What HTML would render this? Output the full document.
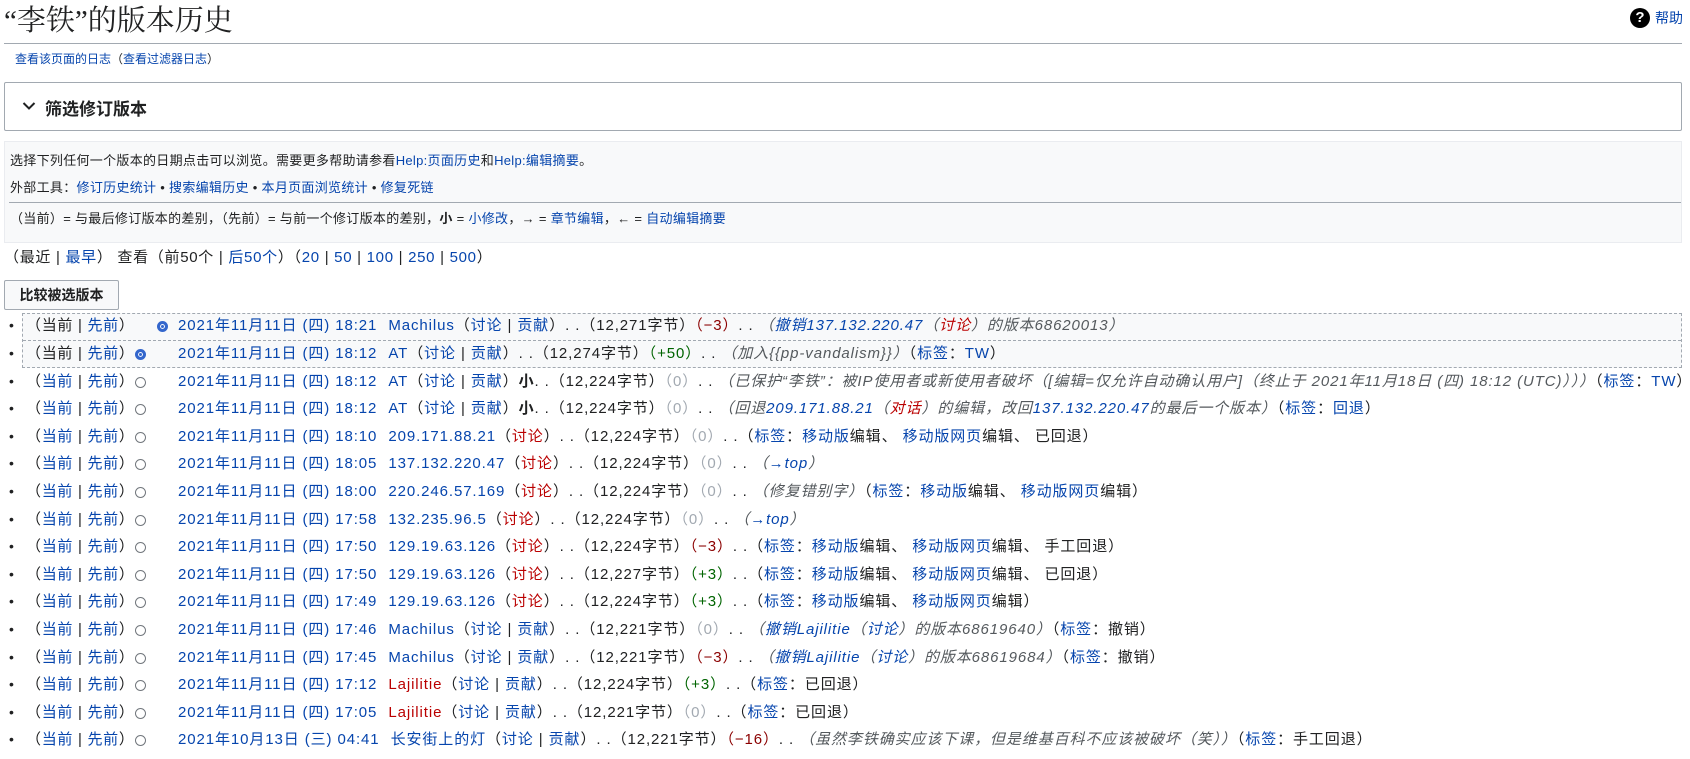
<!DOCTYPE html>
<html><head><meta charset="utf-8">
<style>
*{margin:0;padding:0;box-sizing:border-box}
body{width:1690px;height:759px;overflow:hidden;background:#fff;color:#202122;font-family:"Liberation Sans","Noto Sans CJK SC",sans-serif;font-size:14px;position:relative}
a{color:#0645ad;text-decoration:none}
a.new{color:#ba0000}
.abs{position:absolute;white-space:nowrap}
h1{position:absolute;left:4px;top:2px;font-family:"Liberation Serif","Noto Serif CJK SC",serif;font-weight:normal;font-size:29px;line-height:38px;white-space:nowrap}
.hr{position:absolute;left:4px;width:1678px;top:43px;height:1px;background:#a2a9b1}
.filter{position:absolute;left:4px;top:82px;width:1678px;height:49px;border:1px solid #a2a9b1;border-radius:2px}
.filter span{position:absolute;left:40px;top:12px;font-weight:bold;font-size:17px}
.info{position:absolute;left:4px;top:141px;width:1678px;height:102px;background:#f8f9fa;border:1px solid #eaecf0;font-size:13px;letter-spacing:.3px}
.info div{position:absolute;left:5px;white-space:nowrap}
.btn{position:absolute;left:4px;top:280px;width:115px;height:30px;border:1px solid #a2a9b1;border-radius:2px;background:#f8f9fa;font-weight:bold;font-size:14px;text-align:center;line-height:28px}
.sel{position:absolute;left:22px;top:313px;width:1660px;height:55px;border:1px dashed #a2a9b1;background:#f8f9fa}
.sel div{position:absolute;left:0;right:0;top:26px;border-top:1px dashed #a2a9b1}
.row{position:absolute;left:0;height:27.6px;line-height:27.6px;white-space:nowrap;font-size:15px;letter-spacing:.7px}
.row .b{position:absolute;left:9px;top:0;font-size:14px}
.row .c{position:absolute;left:26px}
.row .r{position:absolute;top:9px;width:11px;height:11px;border-radius:50%;border:1px solid #72777d;background:#fff}
.row .r.on{border:3px solid #36c;box-shadow:inset 0 0 0 1px #fff;background:#36c}
.row .m{position:absolute;left:178px;letter-spacing:.9px}
.row .u{margin-left:6px}
.g{color:#a2a9b1}.neg{color:#8b0000}.pos{color:#006400}
i{font-style:italic;color:#54595d}
</style></head><body>
<h1>“李铁”的版本历史</h1>
<div class="abs" style="left:1630px;top:8px;width:20px;height:20px;border-radius:50%;background:#000;color:#fff;font-weight:bold;font-size:15px;text-align:center;line-height:20px">?</div>
<a class="abs" style="left:1655px;top:8px;font-size:14px;line-height:20px" href="#">帮助</a>
<div class="hr"></div>
<div class="abs" style="left:15px;top:50px;font-size:12px"><a href="#">查看该页面的日志</a>（<a href="#">查看过滤器日志</a>）</div>
<div class="filter"><svg style="position:absolute;left:17px;top:18px" width="14" height="10" viewBox="0 0 14 10"><path d="M1.5 2 L7 7.5 L12.5 2" fill="none" stroke="#202122" stroke-width="2"/></svg><span>筛选修订版本</span></div>
<div class="info">
<div style="top:8px">选择下列任何一个版本的日期点击可以浏览。需要更多帮助请参看<a href="#">Help:页面历史</a>和<a href="#">Help:编辑摘要</a>。</div>
<div style="top:35px">外部工具：<a href="#">修订历史统计</a> • <a href="#">搜索编辑历史</a> • <a href="#">本月页面浏览统计</a> • <a href="#">修复死链</a></div>
<div style="top:60px;left:4px;right:0;height:1px;background:#a2a9b1"></div>
<div style="top:66px">（当前）= 与最后修订版本的差别，（先前）= 与前一个修订版本的差别，<b>小</b> = <a href="#">小修改</a>，→ = <a href="#">章节编辑</a>，← = <a href="#">自动编辑摘要</a></div>
</div>
<div class="abs" style="left:4px;top:248px;line-height:20px;font-size:15px;letter-spacing:.7px">（最近 | <a href="#">最早</a>） 查看（前50个 | <a href="#">后50个</a>）（<a href="#">20</a> | <a href="#">50</a> | <a href="#">100</a> | <a href="#">250</a> | <a href="#">500</a>）</div>
<div class="btn">比较被选版本</div>
<div class="sel"><div></div></div>

<div class="row" style="top:312px"><span class="b">•</span><span class="c">（当前 | <a href="#">先前</a>）</span><span class="r on" style="left:157px"></span><span class="m"><a href="#">2021年11月11日 (四) 18:21</a> <a class="u" href="#">Machilus</a>（<a href="#">讨论</a> | <a href="#">贡献</a>）. .（12,271字节）<span class="neg">（−3）</span>. . <i>（<a href="#">撤销137.132.220.47</a>（<a class="new" href="#">讨论</a>）的版本68620013）</i></span></div>
<div class="row" style="top:340px"><span class="b">•</span><span class="c">（当前 | <a href="#">先前</a>）</span><span class="r on" style="left:135px"></span><span class="m"><a href="#">2021年11月11日 (四) 18:12</a> <a class="u" href="#">AT</a>（<a href="#">讨论</a> | <a href="#">贡献</a>）. .（12,274字节）<span class="pos">（+50）</span>. . <i>（加入{{pp-vandalism}}）</i>（<a href="#">标签</a>：<a href="#">TW</a>）</span></div>
<div class="row" style="top:368px"><span class="b">•</span><span class="c">（<a href="#">当前</a> | <a href="#">先前</a>）</span><span class="r" style="left:135px"></span><span class="m"><a href="#">2021年11月11日 (四) 18:12</a> <a class="u" href="#">AT</a>（<a href="#">讨论</a> | <a href="#">贡献</a>）<b>小</b>. .（12,224字节）<span class="g">（0）</span>. . <i>（已保护“李铁”：被IP使用者或新使用者破坏（[编辑=仅允许自动确认用户]（终止于 2021年11月18日 (四) 18:12 (UTC)）））</i>（<a href="#">标签</a>：<a href="#">TW</a>）</span></div>
<div class="row" style="top:395px"><span class="b">•</span><span class="c">（<a href="#">当前</a> | <a href="#">先前</a>）</span><span class="r" style="left:135px"></span><span class="m"><a href="#">2021年11月11日 (四) 18:12</a> <a class="u" href="#">AT</a>（<a href="#">讨论</a> | <a href="#">贡献</a>）<b>小</b>. .（12,224字节）<span class="g">（0）</span>. . <i>（回退<a href="#">209.171.88.21</a>（<a class="new" href="#">对话</a>）的编辑，改回<a href="#">137.132.220.47</a>的最后一个版本）</i>（<a href="#">标签</a>：<a href="#">回退</a>）</span></div>
<div class="row" style="top:423px"><span class="b">•</span><span class="c">（<a href="#">当前</a> | <a href="#">先前</a>）</span><span class="r" style="left:135px"></span><span class="m"><a href="#">2021年11月11日 (四) 18:10</a> <a class="u" href="#">209.171.88.21</a>（<a class="new" href="#">讨论</a>）. .（12,224字节）<span class="g">（0）</span>. .（<a href="#">标签</a>：<a href="#">移动版</a>编辑、 <a href="#">移动版网页</a>编辑、 已回退）</span></div>
<div class="row" style="top:450px"><span class="b">•</span><span class="c">（<a href="#">当前</a> | <a href="#">先前</a>）</span><span class="r" style="left:135px"></span><span class="m"><a href="#">2021年11月11日 (四) 18:05</a> <a class="u" href="#">137.132.220.47</a>（<a class="new" href="#">讨论</a>）. .（12,224字节）<span class="g">（0）</span>. . <i>（<a href="#">→top</a>）</i></span></div>
<div class="row" style="top:478px"><span class="b">•</span><span class="c">（<a href="#">当前</a> | <a href="#">先前</a>）</span><span class="r" style="left:135px"></span><span class="m"><a href="#">2021年11月11日 (四) 18:00</a> <a class="u" href="#">220.246.57.169</a>（<a class="new" href="#">讨论</a>）. .（12,224字节）<span class="g">（0）</span>. . <i>（修复错别字）</i>（<a href="#">标签</a>：<a href="#">移动版</a>编辑、 <a href="#">移动版网页</a>编辑）</span></div>
<div class="row" style="top:506px"><span class="b">•</span><span class="c">（<a href="#">当前</a> | <a href="#">先前</a>）</span><span class="r" style="left:135px"></span><span class="m"><a href="#">2021年11月11日 (四) 17:58</a> <a class="u" href="#">132.235.96.5</a>（<a class="new" href="#">讨论</a>）. .（12,224字节）<span class="g">（0）</span>. . <i>（<a href="#">→top</a>）</i></span></div>
<div class="row" style="top:533px"><span class="b">•</span><span class="c">（<a href="#">当前</a> | <a href="#">先前</a>）</span><span class="r" style="left:135px"></span><span class="m"><a href="#">2021年11月11日 (四) 17:50</a> <a class="u" href="#">129.19.63.126</a>（<a class="new" href="#">讨论</a>）. .（12,224字节）<span class="neg">（−3）</span>. .（<a href="#">标签</a>：<a href="#">移动版</a>编辑、 <a href="#">移动版网页</a>编辑、 手工回退）</span></div>
<div class="row" style="top:561px"><span class="b">•</span><span class="c">（<a href="#">当前</a> | <a href="#">先前</a>）</span><span class="r" style="left:135px"></span><span class="m"><a href="#">2021年11月11日 (四) 17:50</a> <a class="u" href="#">129.19.63.126</a>（<a class="new" href="#">讨论</a>）. .（12,227字节）<span class="pos">（+3）</span>. .（<a href="#">标签</a>：<a href="#">移动版</a>编辑、 <a href="#">移动版网页</a>编辑、 已回退）</span></div>
<div class="row" style="top:588px"><span class="b">•</span><span class="c">（<a href="#">当前</a> | <a href="#">先前</a>）</span><span class="r" style="left:135px"></span><span class="m"><a href="#">2021年11月11日 (四) 17:49</a> <a class="u" href="#">129.19.63.126</a>（<a class="new" href="#">讨论</a>）. .（12,224字节）<span class="pos">（+3）</span>. .（<a href="#">标签</a>：<a href="#">移动版</a>编辑、 <a href="#">移动版网页</a>编辑）</span></div>
<div class="row" style="top:616px"><span class="b">•</span><span class="c">（<a href="#">当前</a> | <a href="#">先前</a>）</span><span class="r" style="left:135px"></span><span class="m"><a href="#">2021年11月11日 (四) 17:46</a> <a class="u" href="#">Machilus</a>（<a href="#">讨论</a> | <a href="#">贡献</a>）. .（12,221字节）<span class="g">（0）</span>. . <i>（<a href="#">撤销Lajilitie</a>（<a href="#">讨论</a>）的版本68619640）</i>（<a href="#">标签</a>：撤销）</span></div>
<div class="row" style="top:644px"><span class="b">•</span><span class="c">（<a href="#">当前</a> | <a href="#">先前</a>）</span><span class="r" style="left:135px"></span><span class="m"><a href="#">2021年11月11日 (四) 17:45</a> <a class="u" href="#">Machilus</a>（<a href="#">讨论</a> | <a href="#">贡献</a>）. .（12,221字节）<span class="neg">（−3）</span>. . <i>（<a href="#">撤销Lajilitie</a>（<a href="#">讨论</a>）的版本68619684）</i>（<a href="#">标签</a>：撤销）</span></div>
<div class="row" style="top:671px"><span class="b">•</span><span class="c">（<a href="#">当前</a> | <a href="#">先前</a>）</span><span class="r" style="left:135px"></span><span class="m"><a href="#">2021年11月11日 (四) 17:12</a> <a class="u new" href="#">Lajilitie</a>（<a href="#">讨论</a> | <a href="#">贡献</a>）. .（12,224字节）<span class="pos">（+3）</span>. .（<a href="#">标签</a>：已回退）</span></div>
<div class="row" style="top:699px"><span class="b">•</span><span class="c">（<a href="#">当前</a> | <a href="#">先前</a>）</span><span class="r" style="left:135px"></span><span class="m"><a href="#">2021年11月11日 (四) 17:05</a> <a class="u new" href="#">Lajilitie</a>（<a href="#">讨论</a> | <a href="#">贡献</a>）. .（12,221字节）<span class="g">（0）</span>. .（<a href="#">标签</a>：已回退）</span></div>
<div class="row" style="top:726px"><span class="b">•</span><span class="c">（<a href="#">当前</a> | <a href="#">先前</a>）</span><span class="r" style="left:135px"></span><span class="m"><a href="#">2021年10月13日 (三) 04:41</a> <a class="u" href="#">长安街上的灯</a>（<a href="#">讨论</a> | <a href="#">贡献</a>）. .（12,221字节）<span class="neg">（−16）</span>. . <i>（虽然李铁确实应该下课，但是维基百科不应该被破坏（笑））</i>（<a href="#">标签</a>：手工回退）</span></div>
</body></html>
